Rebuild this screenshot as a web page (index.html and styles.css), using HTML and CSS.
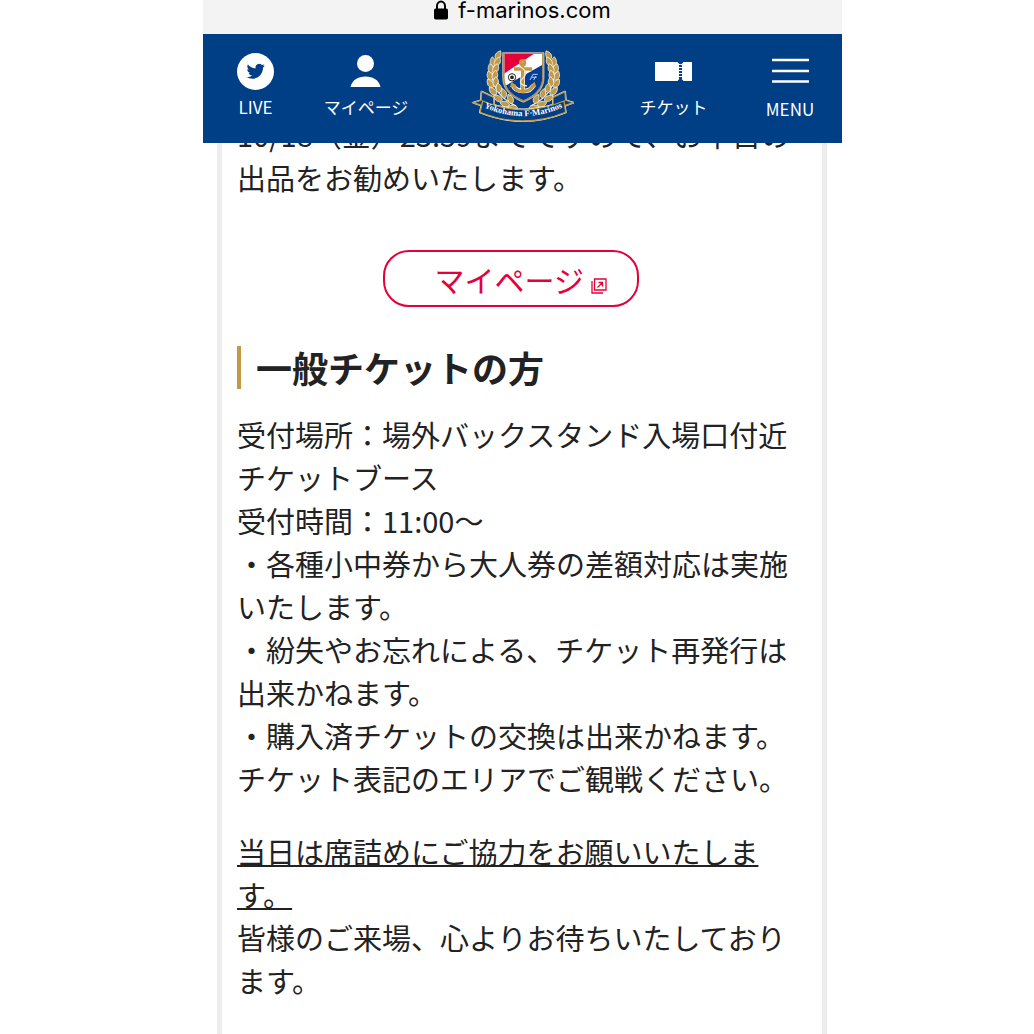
FILE: index.html
```html
<!DOCTYPE html>
<html lang="ja">
<head>
  <meta charset="UTF-8">
  <meta name="viewport" content="width=device-width, initial-scale=1">
  <title>横浜F・マリノス</title>
  <link rel="stylesheet" href="styles.css">
</head>
<body>
  <div class="screen">
    <div class="address-bar">
      <svg class="lock" viewBox="0 0 14 20" aria-hidden="true">
        <path d="M3 9V6a4 4.500 0 0 1 8 0v3" fill="none" stroke="#000" stroke-width="2"/>
        <rect x="0" y="8.500" width="14" height="11" rx="1.800"/>
      </svg>
      <span>f-marinos.com</span>
    </div>

    <header class="site-header">
      <a class="nav-item" href="#live">
        <svg class="nav-icon" viewBox="0 0 37 37" aria-hidden="true">
          <circle cx="18.500" cy="18.500" r="18.500" fill="#fff"/>
          <path transform="translate(9.600 9.200) scale(.76)" fill="#003e86" d="M23.950 4.570a10 10 0 0 1-2.820.77 4.960 4.960 0 0 0 2.160-2.720c-.95.550-2 .950-3.120 1.180a4.920 4.920 0 0 0-8.380 4.480C7.690 8.090 4.070 6.130 1.640 3.160a4.820 4.820 0 0 0-.67 2.480c0 1.710.87 3.210 2.190 4.100a4.900 4.900 0 0 1-2.230-.62v.06a4.920 4.920 0 0 0 3.950 4.830 5 5 0 0 1-2.210.08 4.940 4.940 0 0 0 4.600 3.420A9.870 9.870 0 0 1 0 19.540a13.990 13.990 0 0 0 7.550 2.210c9.050 0 14-7.500 14-13.980 0-.21 0-.42-.02-.63a9.940 9.940 0 0 0 2.460-2.550z"/>
        </svg>
        <span>LIVE</span>
      </a>
      <a class="nav-item" href="#mypage">
        <svg class="nav-icon" viewBox="0 0 37 37" aria-hidden="true">
          <circle cx="18.500" cy="10.500" r="8.500" fill="#fff"/>
          <path d="M3.500 34C5 27 11 23.500 18.500 23.500S32 27 33.500 34z" fill="#fff"/>
        </svg>
        <span>マイページ</span>
      </a>
      <a class="emblem-link" href="#top" aria-label="Yokohama F・Marinos">
        <svg class="emblem" viewBox="30 39 309 225">
          <defs>
            <path id="leaf" d="M0 0C-15-3-17-16-9-29C3-21 8-9 0 0z"/>
            <path id="ribbon-line" d="M58 209Q187 272 316 209"/>
            <clipPath id="shield-clip"><path d="M130 54H244V122C244 158 220 178 187 193C154 178 130 158 130 122z"/></clipPath>
            <g id="laurel">
              <path d="M112 62C84 105 82 170 165 210" fill="none" stroke="#f4e6bf" stroke-width="4"/>
              <g fill="#c29a45" stroke="#fff" stroke-width="2">
                <use href="#leaf" transform="translate(106 72) rotate(42)"/>
                <use href="#leaf" transform="translate(99 92) rotate(8)"/>
                <use href="#leaf" transform="translate(102 90) scale(-1 1) rotate(-10)"/>
                <use href="#leaf" transform="translate(95 112)"/>
                <use href="#leaf" transform="translate(98 111) scale(-1 1) rotate(-5)"/>
                <use href="#leaf" transform="translate(94 133) rotate(-8)"/>
                <use href="#leaf" transform="translate(98 132) scale(-1 1) rotate(5)"/>
                <use href="#leaf" transform="translate(97 154) rotate(-18)"/>
                <use href="#leaf" transform="translate(102 152) scale(-1 1) rotate(12)"/>
                <use href="#leaf" transform="translate(107 175) rotate(-30)"/>
                <use href="#leaf" transform="translate(114 171) scale(-1 1) rotate(24)"/>
                <use href="#leaf" transform="translate(124 193) rotate(-45)"/>
                <use href="#leaf" transform="translate(131 187) scale(-1 1) rotate(32)"/>
                <use href="#leaf" transform="translate(146 207) rotate(-58)"/>
                <use href="#leaf" transform="translate(153 203) scale(-1 1) rotate(40)"/>
                <use href="#leaf" transform="translate(170 216) rotate(-66)"/>
              </g>
            </g>
          </defs>
          <use href="#laurel"/>
          <use href="#laurel" transform="translate(374 0) scale(-1 1)"/>
          <path d="M125 50H249V124C249 162 222 184 187 199C152 184 125 162 125 124z" fill="#b08a3f" stroke="#efe3c4" stroke-width="2"/>
          <g clip-path="url(#shield-clip)">
            <path d="M125 50H249V200H125z" fill="#fff"/>
            <path d="M125 50H224L125 116z" fill="#e4003a"/>
            <path d="M249 84V200H125V154z" fill="#003e98"/>
          </g>
          <circle cx="153" cy="124" r="11" fill="#fff" stroke="#222" stroke-width="3"/>
          <path d="M153 118l6 4-2 7h-8l-2-7z" fill="#222"/>
          <path d="M207 132l9-17h14M212 124h15M218 132l7-12" fill="none" stroke="#b7cde8" stroke-width="3"/>
          <path d="M185 78V160M160 99H212M156 148Q162 165 186 165T217 148" fill="none" stroke="#fff" stroke-width="14"/>
          <g fill="none" stroke="#c29a45" stroke-width="10">
            <circle cx="185" cy="80" r="6"/>
            <path d="M185 88V164M159 99H213M156 146Q162 166 186 166T218 146"/>
          </g>
          <path d="M146 154l6-17 15 14zM226 154l-5-17-16 14z" fill="#c29a45"/>
          <path d="M174 90Q206 107 186 126T198 150" fill="none" stroke="#f4e6bf" stroke-width="4"/>
          <g fill="#003e86" stroke="#fff" stroke-width="6" stroke-linejoin="round">
            <path d="M62 167L98 184V210H66L37 200L60 193z"/>
            <path d="M312 167L276 184V210H308L337 200L314 193z"/>
            <path d="M65 195Q187 246 309 195L314 229Q187 281 57 229z"/>
          </g>
          <g fill="#003e86" stroke="#c29a45" stroke-width="4">
            <path d="M62 167L98 184V210H66L37 200L60 193z"/>
            <path d="M312 167L276 184V210H308L337 200L314 193z"/>
            <path d="M65 195Q187 246 309 195L314 229Q187 281 57 229z"/>
          </g>
          <text class="emblem-name"><textPath href="#ribbon-line" startOffset="50%">Yokohama F·Marinos</textPath></text>
        </svg>
      </a>
      <a class="nav-item" href="#ticket">
        <svg class="nav-icon" viewBox="0 0 37 37" aria-hidden="true">
          <path d="M0 9H22.500Q25.500 13.500 28.500 9H37V28H28.500Q25.500 23.500 22.500 28H0z" fill="#fff"/>
          <path d="M25.500 12V26" stroke="#003e86" stroke-width="3" stroke-dasharray="2 1"/>
        </svg>
        <span>チケット</span>
      </a>
      <button class="nav-item nav-menu" type="button">
        <svg class="nav-icon" viewBox="0 0 37 37" aria-hidden="true">
          <path d="M0 7H37M0 18H37M0 28.500H37" stroke="#fff" stroke-width="2.400"/>
        </svg>
        <span>MENU</span>
      </button>
    </header>

    <div class="viewport">
      <main class="article">
        <p>10/18（金）23:59までですので、お早目の出品をお勧めいたします。</p>
        <div class="button-row">
          <a class="mypage-button" href="#mypage">マイページ
            <svg class="external" viewBox="0 0 16 16" aria-hidden="true">
              <path d="M3.500 1H15V12H3.500zM1 3V15H12M6.500 9.500L11 5M7.500 4.500H11.500V8.500" fill="none" stroke="currentColor" stroke-width="1.300"/>
            </svg>
          </a>
        </div>
        <h2>一般チケットの方</h2>
        <p>受付場所：場外バックスタンド入場口付近チケットブース<br>
          受付時間：11:00～<br>
          ・各種小中券から大人券の差額対応は実施いたします。<br>
          ・紛失やお忘れによる、チケット再発行は出来かねます。<br>
          ・購入済チケットの交換は出来かねます。チケット表記のエリアでご観戦ください。</p>
        <p><u>当日は席詰めにご協力をお願いいたします。</u><br>
          皆様のご来場、心よりお待ちいたしております。</p>
      </main>
    </div>
  </div>
</body>
</html>
```
FILE: styles.css
```css
* {
  box-sizing: border-box;
}
body {
  margin: 0;
  padding: 0 192px 0 203px;
  background: #fff;
  color: #222;
  font-family: "Noto Sans CJK JP", sans-serif;
}
.screen {
  display: flex;
  flex-direction: column;
  min-height: 100vh;
}
.address-bar {
  display: flex;
  justify-content: center;
  align-items: flex-start;
  gap: 10px;
  height: 34px;
  background: #f3f3f3;
  color: #000;
  font-family: Inter, sans-serif;
  font-size: 22px;
  line-height: 20px;
}
.lock {
  width: 14px;
  height: 20px;
}
.site-header {
  display: grid;
  grid-template-columns: 83fr 138fr 174fr 129fr 104fr;
  justify-items: center;
  align-items: start;
  height: 109px;
  padding: 15px 0 0 11px;
  background: #003e86;
}
.nav-item {
  display: flex;
  flex-direction: column;
  align-items: center;
  gap: 5px;
  padding: 4px 0 0;
  border: 0;
  background: none;
  color: #fff;
  font-family: inherit;
  font-size: 17px;
  line-height: 24px;
  text-decoration: none;
  white-space: nowrap;
}
.nav-menu {
  gap: 7px;
  cursor: pointer;
}
.nav-icon {
  width: 37px;
  height: 37px;
}
.emblem {
  display: block;
  width: 103px;
  height: 75px;
}
.emblem-name {
  fill: #fff;
  font-family: "Liberation Serif", serif;
  font-size: 26px;
  font-weight: bold;
  text-anchor: middle;
}
/* clips the text that has scrolled up under the header */
.viewport {
  display: flex;
  flex: 1;
  overflow: hidden;
}
.article {
  flex: 1;
  margin: -30px 15px 0 14px;
  padding: 0 15px;
  border: solid #ededed;
  border-width: 0 5px;
  font-size: 29px;
  line-height: 43px;
}
.article p {
  margin: 0 0 30px;
}
.article p:last-child {
  margin-bottom: 0;
}
.article u {
  text-decoration-thickness: 2px;
  text-decoration-skip-ink: none;
}
.button-row {
  display: flex;
  justify-content: center;
  margin: 51px 0 39px;
  padding-right: 22px;
}
.mypage-button {
  display: flex;
  justify-content: flex-end;
  align-items: center;
  gap: 7px;
  width: 256px;
  height: 57px;
  padding: 2px 30px 0 0;
  border: 2px solid #e4003a;
  border-radius: 26px;
  color: #e4003a;
  font-size: 30px;
  text-decoration: none;
}
.external {
  width: 16px;
  height: 16px;
  margin-top: 12px;
}
.article h2 {
  margin: 0 0 24px;
  padding-left: 15px;
  border-left: 4px solid #c29a45;
  font-size: 36px;
  line-height: 43px;
}
```
